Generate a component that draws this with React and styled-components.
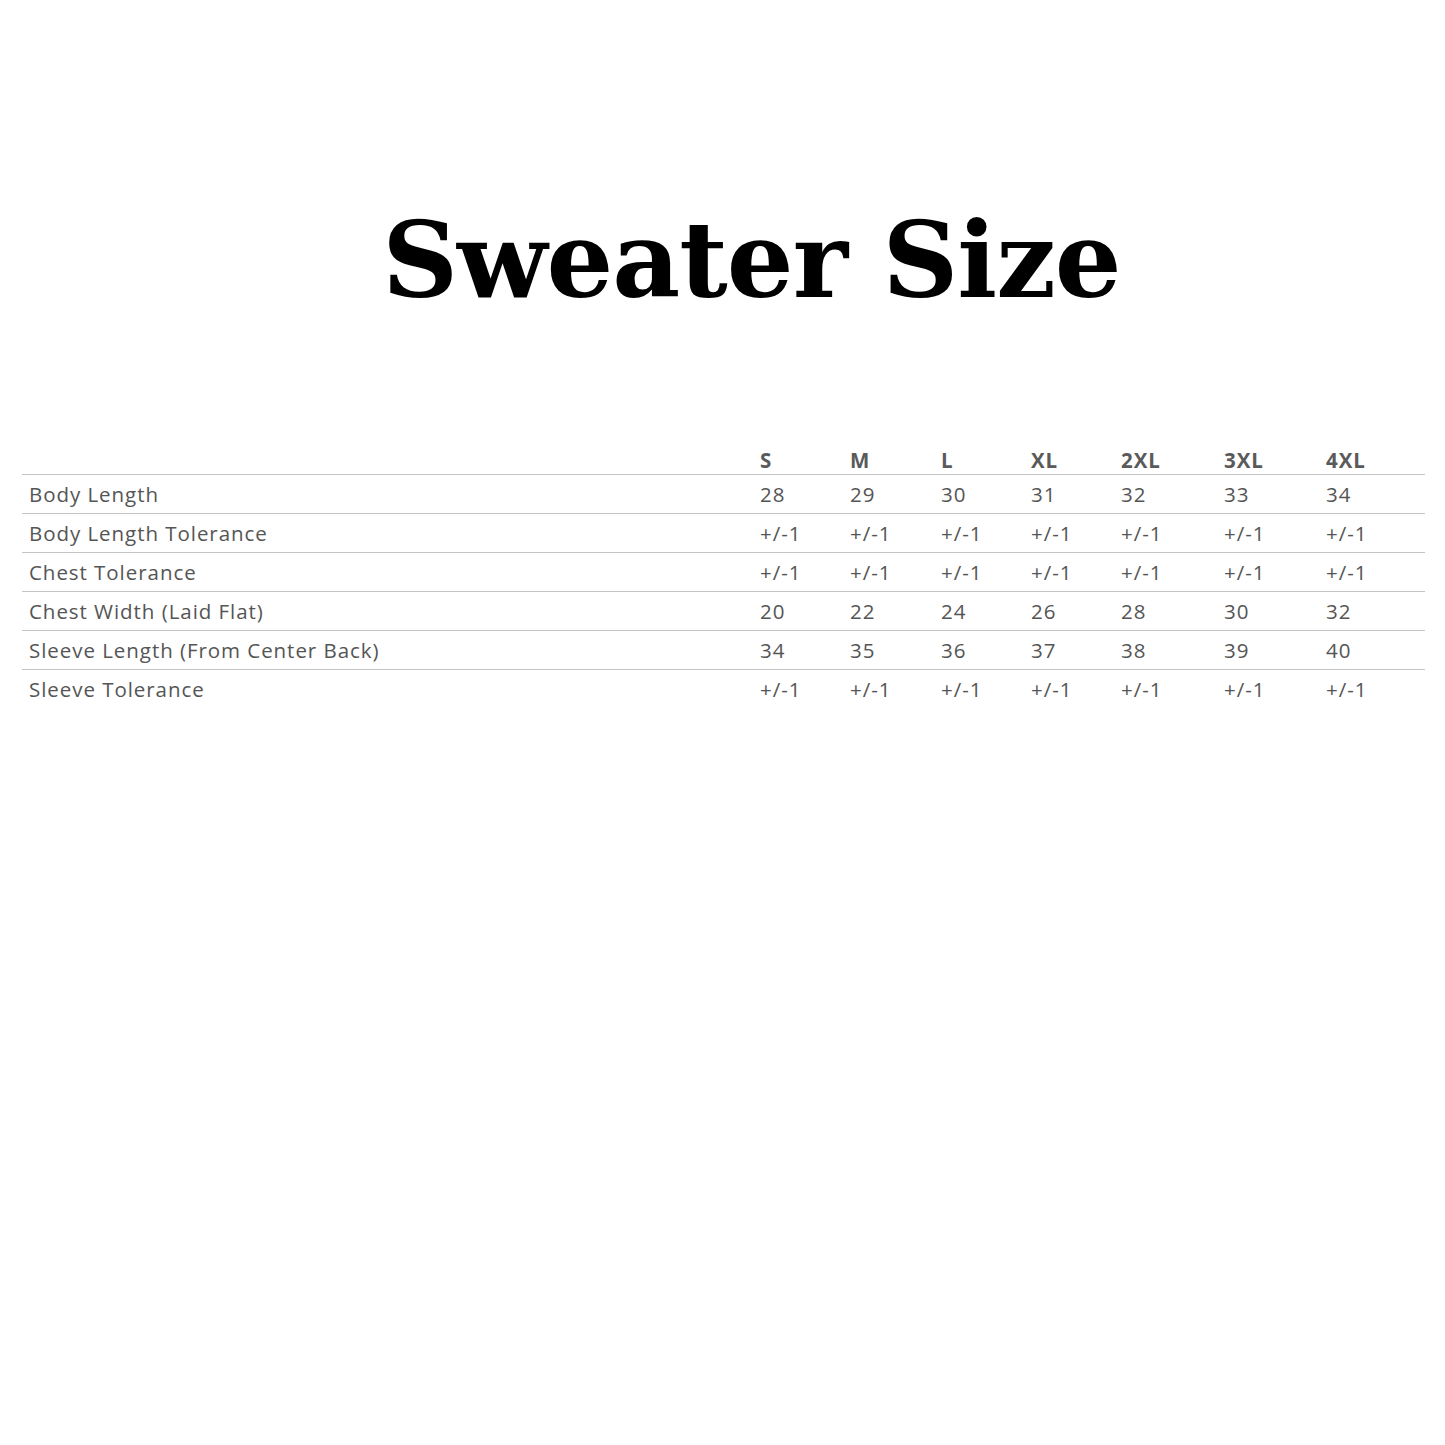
import React from 'react'
import styled, { createGlobalStyle } from 'styled-components'

const Global = createGlobalStyle`
  html, body { margin: 0; padding: 0; background: #fff; }
  body { width: 1445px; height: 1445px; }
`

const Page = styled.div`
  width: 1445px;
  height: 1445px;
  background: #fff;
  padding-top: 205px;
  box-sizing: border-box;
`

const Title = styled.h1`
  margin: 0;
  text-align: center;
  font-family: "DejaVu Serif", serif;
  font-weight: bold;
  font-size: 105px;
  line-height: 110px;
  letter-spacing: -1px;
  color: #000;
  padding-left: 58px;
`

const Table = styled.div`
  margin: 121px 0 0 22px;
  width: 1403px;
  font-family: "Open Sans", "Liberation Sans", sans-serif;
  font-size: 20.5px;
  letter-spacing: 0.95px;
  color: #555;
`

const Row = styled.div`
  display: grid;
  grid-template-columns: 732px 90px 91px 90px 90px 103px 102px 105px;
  height: ${p => (p.$head ? '28px' : '35px')};
  padding-top: ${p => (p.$head ? '10px' : '3px')};
  align-items: center;
  border-top: ${p => (p.$head ? 'none' : '1.5px solid #c4c4c4')};
`

const Cell = styled.div`
  padding-left: ${p => (p.$label ? '7px' : '6px')};
  font-weight: ${p => (p.$head ? 700 : 400)};
  color: ${p => (p.$head ? '#5a5a5a' : '#555')};
  white-space: nowrap;
`

const sizes = ['S', 'M', 'L', 'XL', '2XL', '3XL', '4XL']
const tol = Array(7).fill('+/-1')

const rows = [
  ['Body Length', ['28', '29', '30', '31', '32', '33', '34']],
  ['Body Length Tolerance', tol],
  ['Chest Tolerance', tol],
  ['Chest Width (Laid Flat)', ['20', '22', '24', '26', '28', '30', '32']],
  ['Sleeve Length (From Center Back)', ['34', '35', '36', '37', '38', '39', '40']],
  ['Sleeve Tolerance', tol],
]

export default function App() {
  return (
    <Page>
      <Global />
      <Title>Sweater Size</Title>
      <Table>
        <Row $head>
          <Cell $label />
          {sizes.map(s => <Cell key={s} $head>{s}</Cell>)}
          <Cell />
        </Row>
        {rows.map(([label, vals]) => (
          <Row key={label}>
            <Cell $label>{label}</Cell>
            {vals.map((v, i) => <Cell key={i}>{v}</Cell>)}
            <Cell />
          </Row>
        ))}
      </Table>
    </Page>
  )
}
